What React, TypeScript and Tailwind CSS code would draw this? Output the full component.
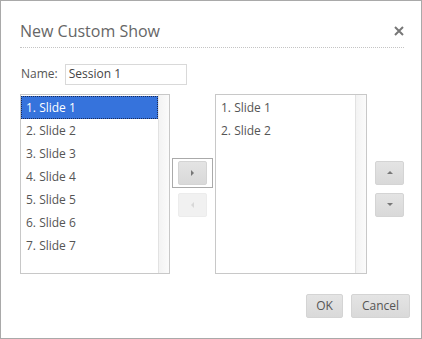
import React from 'react';

const slides = ['1. Slide 1', '2. Slide 2', '3. Slide 3', '4. Slide 4', '5. Slide 5', '6. Slide 6', '7. Slide 7'];
const picked = ['1. Slide 1', '2. Slide 2'];

function ListBox({ items, selected, width }: { items: string[]; selected?: number; width: string }) {
  return (
    <div className={`flex shrink-0 h-[180px] ${width} border border-[#c8c8c8] bg-white`}>
      <div className="flex-1 flex flex-col pt-px">
        {items.map((s, i) => (
          <div
            key={s}
            className={
              i === selected
                ? 'h-[23px] flex items-center pl-[5px] bg-[#3673dc] text-white outline-1 outline-dotted outline-[#1a2a55] -outline-offset-1'
                : 'h-[23px] flex items-center pl-[5px] text-[#555]'
            }
          >
            {s}
          </div>
        ))}
      </div>
      <div className="w-[11px] border-l border-[#e2e2e2] bg-gradient-to-r from-[#f3f3f3] to-[#fbfbfb]" />
    </div>
  );
}

function Arrow({ dir, faded }: { dir: 'right' | 'left' | 'up' | 'down'; faded?: boolean }) {
  const pts = {
    right: '1,0 4,3 1,6',
    left: '4,0 1,3 4,6',
    up: '0,4 3,1 6,4',
    down: '0,1 3,4 6,1',
  }[dir];
  return (
    <svg width="6" height="6" viewBox="0 0 6 6">
      <polygon points={pts} fill={faded ? '#d8d8d8' : '#777'} />
    </svg>
  );
}

function SmallBtn({ dir, faded }: { dir: 'right' | 'left' | 'up' | 'down'; faded?: boolean }) {
  return (
    <div
      className={
        faded
          ? 'w-[29px] h-[24px] rounded-[2px] bg-[#f1f1f1] border border-[#ececec] flex items-center justify-center'
          : 'w-[29px] h-[24px] rounded-[2px] bg-gradient-to-b from-[#e4e4e4] to-[#d9d9d9] border border-[#d4d4d4] flex items-center justify-center'
      }
    >
      <Arrow dir={dir} faded={faded} />
    </div>
  );
}

export default function App() {
  return (
    <div
      className="w-[422px] h-[339px] border border-[#a9a9a9] bg-white flex flex-col pl-[19px] pr-[17px] text-[12px] text-[#555]"
      style={{ fontFamily: '"Open Sans", sans-serif' }}
    >
      {/* Header */}
      <div className="flex items-center justify-between h-[47px] pt-[14px] border-b border-dotted border-[#c4c4c4]">
        <div className="text-[16px] text-[#666]">New Custom Show</div>
        <svg width="10" height="10" viewBox="0 0 10 10">
          <path d="M1 1 L9 9 M9 1 L1 9" stroke="#777" strokeWidth="2" />
        </svg>
      </div>

      {/* Name */}
      <div className="flex items-center mt-[15px] h-[22px]">
        <span className="pl-px">Name:</span>
        <div className="ml-[7px] w-[122px] h-[21px] border border-[#d9d9d9] flex items-center pl-[3px] text-[#444]">
          Session 1
        </div>
      </div>

      {/* Lists */}
      <div className="flex mt-[9px]">
        <ListBox items={slides} selected={0} width="w-[150px]" />
        <div className="w-[45px] shrink-0 flex flex-col items-center pt-[64px]">
          <div className="border border-[#aaa] px-[5px] py-[2px]">
            <SmallBtn dir="right" />
          </div>
          <div className="mt-[5px]">
            <SmallBtn dir="left" faded />
          </div>
        </div>
        <ListBox items={picked} width="w-[152px]" />
        <div className="shrink-0 flex flex-col pl-[8px] pt-[67px] gap-[8px]">
          <SmallBtn dir="up" />
          <SmallBtn dir="down" />
        </div>
      </div>

      {/* Footer */}
      <div className="flex justify-end gap-[8px] mt-[20px] mr-[-6px]">
        <div className="w-[37px] h-[24px] rounded-[2px] bg-gradient-to-b from-[#e4e4e4] to-[#d9d9d9] border border-[#d4d4d4] flex items-center justify-center">
          OK
        </div>
        <div className="w-[59px] h-[24px] rounded-[2px] bg-gradient-to-b from-[#e4e4e4] to-[#d9d9d9] border border-[#d4d4d4] flex items-center justify-center">
          Cancel
        </div>
      </div>
    </div>
  );
}
